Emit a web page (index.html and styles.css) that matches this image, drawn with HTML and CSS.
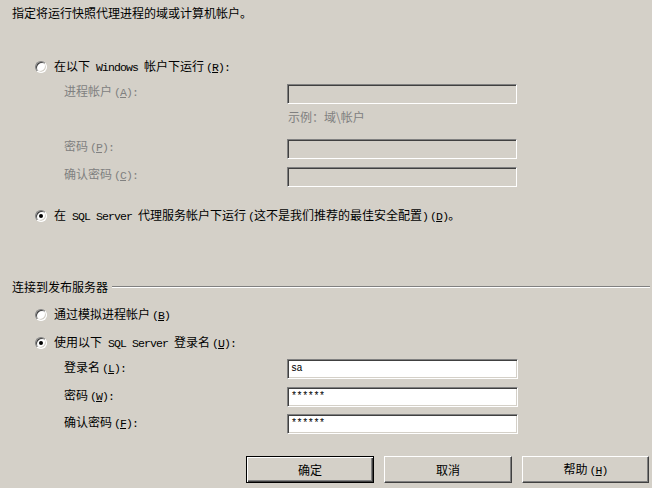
FILE: index.html
```html
<!DOCTYPE html>
<html lang="zh-CN">
<head>
<meta charset="utf-8">
<title>帐户</title>
<link rel="stylesheet" href="styles.css">
</head>
<body>
<div class="dialog">
  <div class="title">指定将运行快照代理进程的域或计算机帐户。</div>

  <div class="radio-row r1">
    <span class="radio"></span>
    <span class="rtext">在以下<span class="lat"> Windows </span>帐户下运行<span class="lat m">(<u>R</u>):</span></span>
  </div>

  <div class="field f1 disabled">
    <span class="label">进程帐户<span class="lat m">(<u>A</u>):</span></span>
    <span class="input"></span>
  </div>
  <div class="hint">示例：域\帐户</div>
  <div class="field f2 disabled">
    <span class="label">密码<span class="lat m">(<u>P</u>):</span></span>
    <span class="input"></span>
  </div>
  <div class="field f3 disabled">
    <span class="label">确认密码<span class="lat m">(<u>C</u>):</span></span>
    <span class="input"></span>
  </div>

  <div class="radio-row r2">
    <span class="radio checked"></span>
    <span class="rtext">在<span class="lat"> SQL Server </span>代理服务帐户下运行<span class="lat m">(</span>这不是我们推荐的最佳安全配置<span class="lat">)<span class="m">(<u>D</u>)</span></span>。</span>
  </div>

  <div class="section">
    <span class="stext">连接到发布服务器</span>
    <span class="sline"></span>
  </div>

  <div class="radio-row r3">
    <span class="radio"></span>
    <span class="rtext">通过模拟进程帐户<span class="lat m">(<u>B</u>)</span></span>
  </div>
  <div class="radio-row r4">
    <span class="radio checked"></span>
    <span class="rtext">使用以下<span class="lat"> SQL Server </span>登录名<span class="lat m">(<u>U</u>):</span></span>
  </div>

  <div class="field lower fl">
    <span class="label">登录名<span class="lat m">(<u>L</u>):</span></span>
    <span class="input white"><span class="val">sa</span></span>
  </div>
  <div class="field lower fw">
    <span class="label">密码<span class="lat m">(<u>W</u>):</span></span>
    <span class="input white"><span class="val">******</span></span>
  </div>
  <div class="field lower ff">
    <span class="label">确认密码<span class="lat m">(<u>F</u>):</span></span>
    <span class="input white"><span class="val">******</span></span>
  </div>

  <div class="buttons">
    <button class="btn default">确定</button>
    <button class="btn">取消</button>
    <button class="btn">帮助<span class="lat m">(<u>H</u>)</span></button>
  </div>
</div>
</body>
</html>
```

FILE: styles.css
```css
* { box-sizing: border-box; }

html, body {
  margin: 0;
  padding: 0;
  background: #d4d0c8;
}

body {
  width: 652px;
  height: 488px;
  overflow: hidden;
  font-family: "Noto Sans CJK SC", "Noto Sans", sans-serif;
  font-size: 12px;
  color: #000;
}

.dialog {
  display: flex;
  flex-direction: column;
}

.lat {
  font-family: "Liberation Mono", "DejaVu Sans Mono", monospace;
  font-size: 11.5px;
  letter-spacing: -0.9px;
}
.m { margin-left: 2px; }

.title {
  margin-top: 6px;
  height: 14px;
  line-height: 14px;
  padding-left: 12px;
  white-space: nowrap;
}

.radio-row {
  display: flex;
  align-items: center;
  height: 16px;
  padding-left: 35px;
  white-space: nowrap;
}
.r1 { margin-top: 39px; }
.r2 { margin-top: 21px; }
.r3 { margin-top: 13px; }
.r4 { margin-top: 12px; }

.radio {
  position: relative;
  width: 12px;
  height: 12px;
  border-radius: 50%;
  background: #fff;
  border: 1px solid;
  border-color: #808080 #ffffff #ffffff #808080;
  box-shadow: inset 1px 1px 0 #404040, inset -1px -1px 0 #d4d0c8;
  flex: none;
}
.radio.checked::after {
  content: "";
  position: absolute;
  left: 3px;
  top: 3px;
  width: 4px;
  height: 4px;
  border-radius: 50%;
  background: #000;
}

.rtext {
  margin-left: 7px;
  line-height: 14px;
}

.field {
  display: flex;
  align-items: flex-start;
  height: 20px;
  padding-left: 64px;
  white-space: nowrap;
}
.f1 { margin-top: 9px; }
.f2 { margin-top: 15px; }
.f3 { margin-top: 8px; }

.field .label {
  width: 223px;
  line-height: 14px;
}
.field.disabled .label { color: #808080; }

.field.lower { align-items: center; }
.field.lower .label { margin-top: -3px; }
.fl { margin-top: 8px; }
.fw { margin-top: 8px; }
.ff { margin-top: 7px; }

.input {
  display: flex;
  align-items: center;
  width: 230px;
  height: 20px;
  border: 1px solid;
  border-color: #808080 #ffffff #ffffff #808080;
  box-shadow: inset 1px 1px 0 #404040, inset -1px -1px 0 #d4d0c8;
  background: #d4d0c8;
  padding-left: 3px;
}
.input.white {
  width: 231px;
  background: #fff;
}
.val {
  font-family: "Liberation Mono", "DejaVu Sans Mono", monospace;
  font-size: 10px;
  letter-spacing: -0.4px;
  line-height: 12px;
}

.hint {
  margin-top: 6px;
  height: 14px;
  line-height: 14px;
  padding-left: 288px;
  color: #808080;
  white-space: nowrap;
}

.section {
  display: flex;
  align-items: center;
  margin-top: 56px;
  height: 14px;
  padding-left: 12px;
  padding-right: 2px;
}
.stext {
  line-height: 14px;
  white-space: nowrap;
}
.sline {
  flex: 1;
  height: 2px;
  margin-left: 4px;
  border-top: 1px solid #808080;
  border-bottom: 1px solid #ffffff;
}

.buttons {
  display: flex;
  gap: 10px;
  margin-top: 22px;
  padding-left: 246px;
}
.btn {
  width: 128px;
  height: 27px;
  padding: 0;
  margin: 0;
  font-family: "Noto Sans CJK SC", "Noto Sans", sans-serif;
  font-size: 12px;
  line-height: 14px;
  color: #000;
  background: #d4d0c8;
  border: 1px solid;
  border-color: #ffffff #404040 #404040 #ffffff;
  box-shadow: inset -1px -1px 0 #808080, inset 1px 1px 0 #d4d0c8;
}
.btn:last-child { width: 127px; }
.btn.default {
  border: 1px solid #000;
  box-shadow: inset 1px 1px 0 #ffffff, inset -1px -1px 0 #404040, inset -2px -2px 0 #808080;
}
```
